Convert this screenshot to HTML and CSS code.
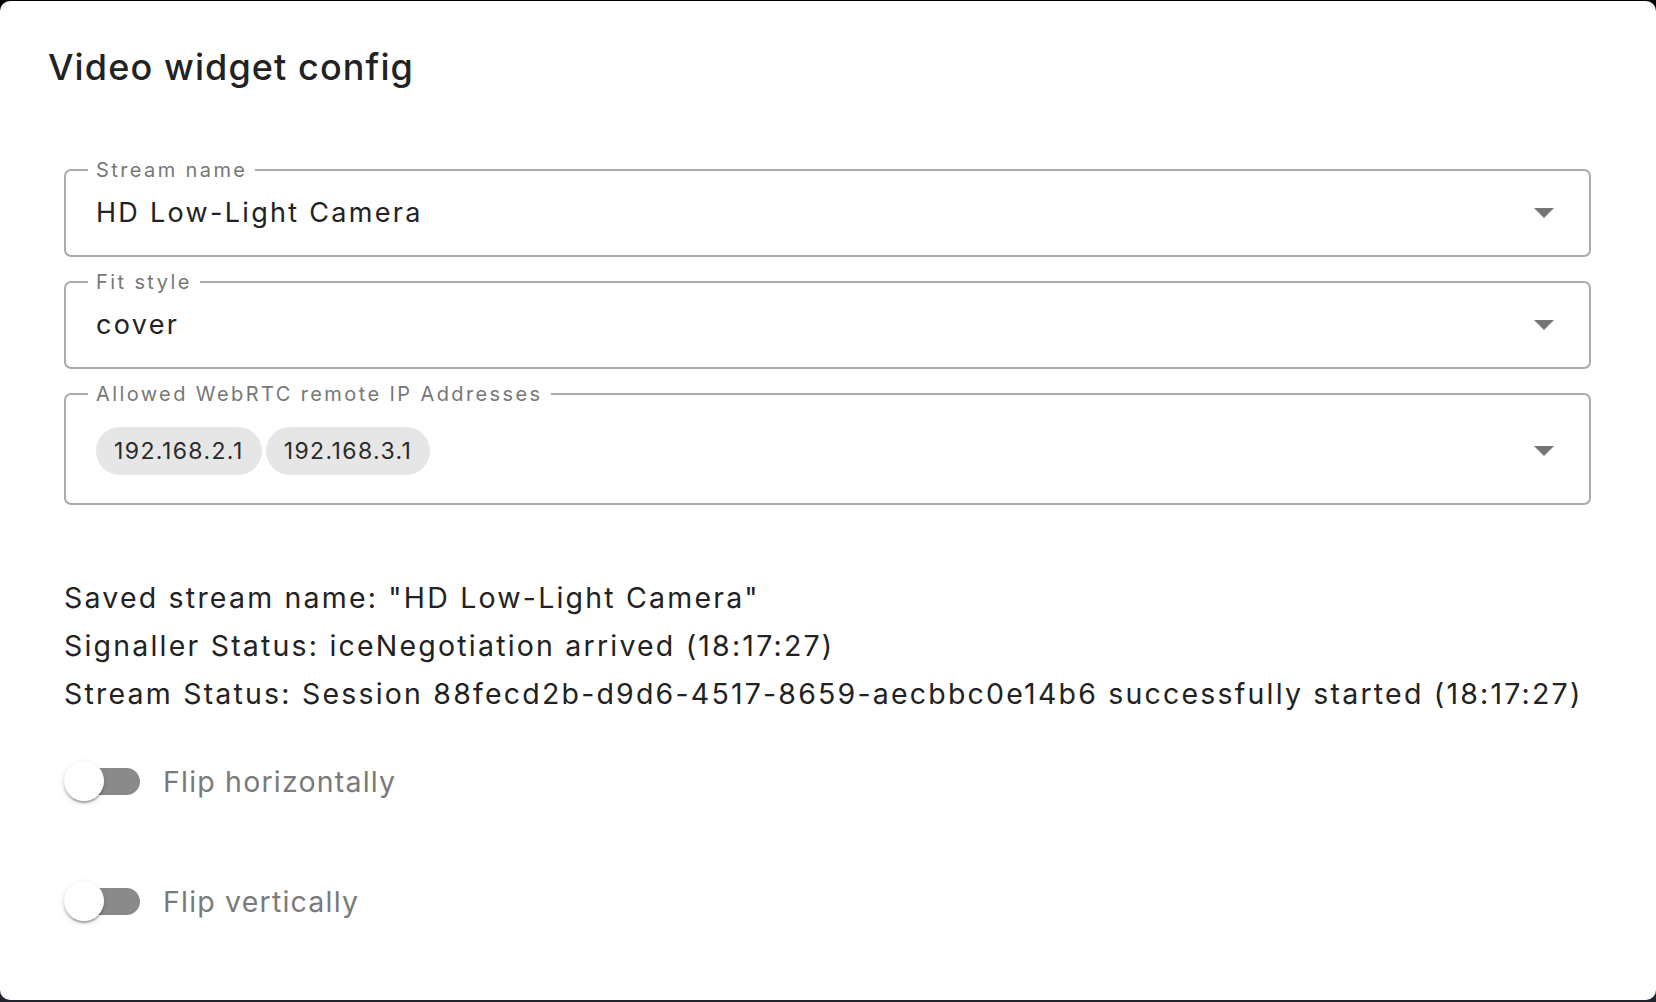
FILE: index.html
```html
<!DOCTYPE html>
<html lang="en">
<head>
<meta charset="utf-8">
<title>Video widget config</title>
<link rel="stylesheet" href="styles.css">
</head>
<body>
<div class="dialog">
  <h2 class="dialog-title">Video widget config</h2>
  <div class="dialog-content">
    <fieldset class="field">
      <legend class="field-label">Stream name</legend>
      <div class="field-row">
        <span class="field-value">HD Low-Light Camera</span>
        <svg class="caret" width="20" height="10" viewBox="0 0 20 10"><path d="M0 0h20L10 10z" fill="#757575"/></svg>
      </div>
    </fieldset>
    <fieldset class="field">
      <legend class="field-label">Fit style</legend>
      <div class="field-row">
        <span class="field-value">cover</span>
        <svg class="caret" width="20" height="10" viewBox="0 0 20 10"><path d="M0 0h20L10 10z" fill="#757575"/></svg>
      </div>
    </fieldset>
    <fieldset class="field field-chips">
      <legend class="field-label">Allowed WebRTC remote IP Addresses</legend>
      <div class="field-row">
        <div class="chips">
          <span class="chip">192.168.2.1</span>
          <span class="chip">192.168.3.1</span>
        </div>
        <svg class="caret" width="20" height="10" viewBox="0 0 20 10"><path d="M0 0h20L10 10z" fill="#757575"/></svg>
      </div>
    </fieldset>

    <div class="status">
      <p class="status-line">Saved stream name: "HD Low-Light Camera"</p>
      <p class="status-line">Signaller Status: iceNegotiation arrived (18:17:27)</p>
      <p class="status-line">Stream Status: Session 88fecd2b-d9d6-4517-8659-aecbbc0e14b6 successfully started (18:17:27)</p>
    </div>

    <div class="toggles">
      <label class="toggle">
        <span class="switch"><span class="track"></span><span class="thumb"></span></span>
        <span class="toggle-label">Flip horizontally</span>
      </label>
      <label class="toggle">
        <span class="switch"><span class="track"></span><span class="thumb"></span></span>
        <span class="toggle-label">Flip vertically</span>
      </label>
    </div>
  </div>
</div>
</body>
</html>
```

FILE: styles.css
```css
html, body {
  margin: 0;
  padding: 0;
  height: 100%;
}
body {
  background: linear-gradient(#000 0, #000 50%, #22252d 50%, #22252d 100%);
  font-family: Inter, "Noto Sans", "Liberation Sans", sans-serif;
  overflow: hidden;
}
.dialog {
  box-sizing: border-box;
  margin-top: 1px;
  height: 999px;
  background: #fff;
  border-radius: 10px;
  overflow: hidden;
}
.dialog-title {
  margin: 0;
  padding: 44px 0 0 48px;
  font-size: 36px;
  line-height: 44px;
  font-weight: 500;
  letter-spacing: 1.1px;
  color: #222;
}
.dialog-content {
  padding: 69px 65px 0 64px;
}
.field {
  margin: 0 0 13px 0;
  padding: 15px 35px 26px 22px;
  border: 2px solid #ababab;
  border-radius: 7px;
  min-width: 0;
}
.field-chips {
  padding-top: 21px;
  padding-bottom: 28px;
}
.field-label {
  padding: 0 8px;
  font-size: 20px;
  line-height: 24px;
  letter-spacing: 2.4px;
  color: #777;
}
.field-row {
  display: flex;
  align-items: center;
  justify-content: space-between;
  padding-left: 8px;
  min-height: 32px;
}
.field-value {
  font-size: 27px;
  line-height: 32px;
  letter-spacing: 2.3px;
  color: #222;
}
.caret {
  display: block;
  flex: none;
}
.chips {
  display: flex;
  gap: 4px;
}
.chip {
  display: inline-flex;
  align-items: center;
  height: 48px;
  padding: 0 18px 0 18px;
  border-radius: 24px;
  background: #e6e6e6;
  font-size: 23px;
  letter-spacing: 1.4px;
  color: #2a2a2a;
}
.status {
  margin-top: 69px;
}
.status-line {
  margin: 0;
  font-size: 28.5px;
  line-height: 48px;
  letter-spacing: 2.2px;
  color: #222;
  white-space: nowrap;
}
.toggles {
  margin-top: 33px;
  display: flex;
  flex-direction: column;
  gap: 60px;
}
.toggle {
  display: flex;
  align-items: center;
  height: 60px;
}
.switch {
  position: relative;
  display: block;
  width: 76px;
  height: 40px;
  flex: none;
}
.track {
  display: block;
  margin: 6.5px 0 0 6px;
  width: 70px;
  height: 27px;
  border-radius: 13.5px;
  background: #8a8a8a;
}
.thumb {
  position: absolute;
  left: 0;
  top: 0;
  width: 40px;
  height: 40px;
  border-radius: 50%;
  background: #fff;
  box-shadow: 0 3px 2px -1px rgba(0,0,0,.2), 0 2px 2px 0 rgba(0,0,0,.14), 0 2px 6px 0 rgba(0,0,0,.12);
}
.toggle-label {
  margin-left: 23px;
  font-size: 28.5px;
  letter-spacing: 1.2px;
  color: #7a7a7a;
}
```
